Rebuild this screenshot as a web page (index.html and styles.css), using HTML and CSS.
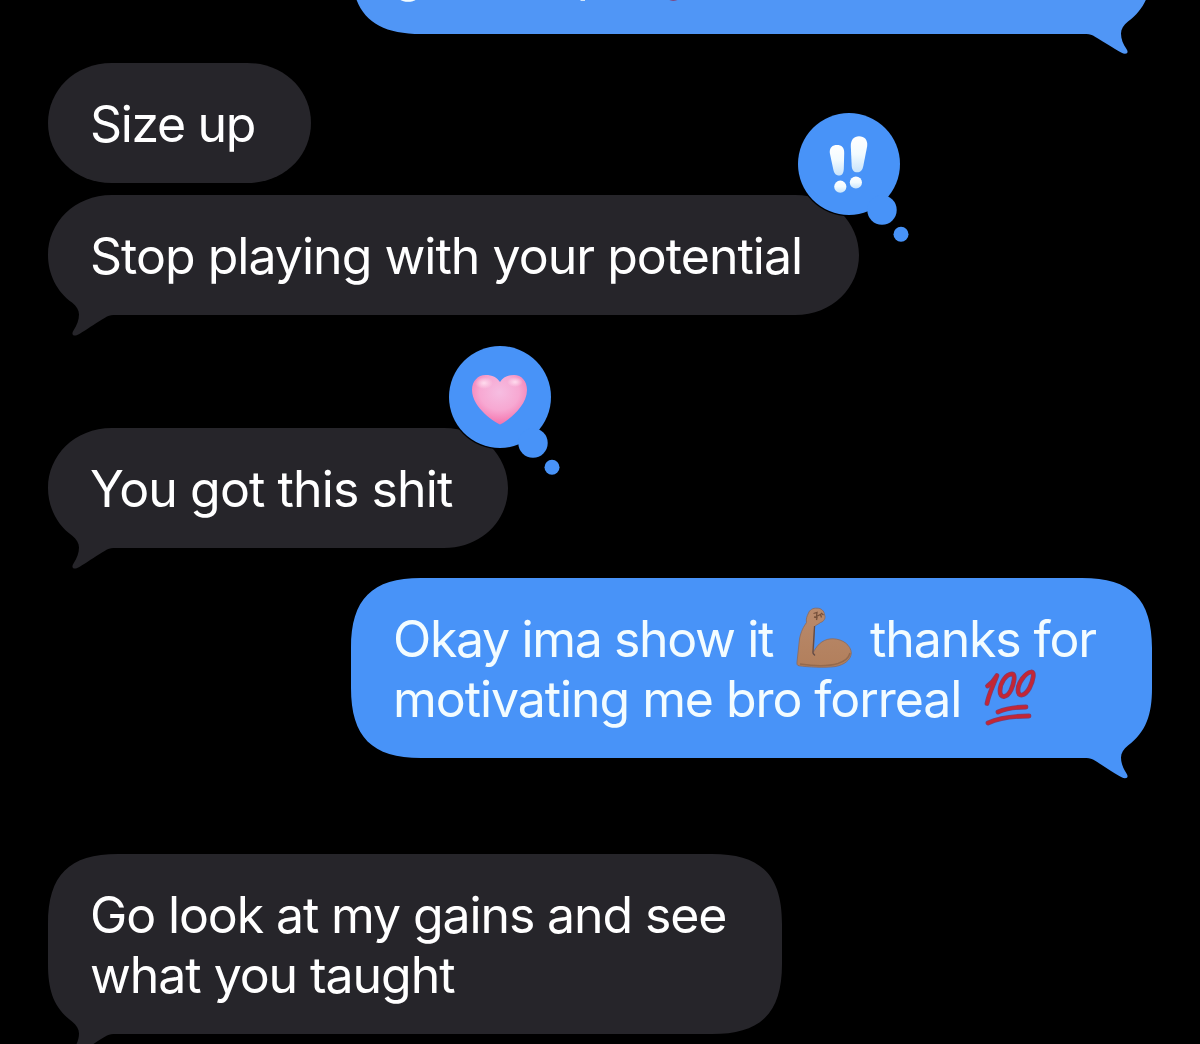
FILE: index.html
```html
<!DOCTYPE html>
<html lang="en">
<head>
    <meta charset="UTF-8">
    <title>Messages</title>
    <link rel="stylesheet" href="styles.css">
</head>
<body>
<div class="thread">

    <div class="bubble sent first">
        <svg class="shape" width="801" height="180" viewBox="0 0 801 180">
            <path d="M0 70C0 21 21 0 70 0H731C780 0 801 21 801 70V110C801 159 780 180 731 180H68C64 180 62 180.200 59 181.600C53 185 44 191 37 195C32 198 29 199.800 27 199.800C24 199.800 23.800 197.500 25.500 195C29 190 31 185 31 179.500C31 175 28.500 171 24 167.500C6 154 0 137 0 110Z"/>
        </svg>
        <div class="line good">good reps</div>
        <svg class="mark" width="20" height="8" viewBox="0 0 20 8"><path d="M7 4.500C10 6 14 5.500 17 4" fill="none" stroke="#8c3060" stroke-width="2.500"/></svg>
    </div>

    <div class="bubble received size">
        <svg class="shape" width="263" height="120" viewBox="0 0 263 120">
            <path d="M0 60C0 28 26 0 64 0H199C237 0 263 28 263 60C263 92 237 120 199 120H64C26 120 0 92 0 60Z"/>
        </svg>
        <div class="line up">Size up</div>
    </div>

    <div class="bubble received stop">
        <svg class="shape" width="811" height="120" viewBox="0 0 811 120">
            <path d="M0 60C0 28 26 0 64 0H747C785 0 811 28 811 60C811 92 785 120 747 120H68C64 120 62 120.200 59 121.600C53 125 44 131 37 135.500C32 138.500 29 140.500 27 140.500C24 140.500 23.800 138 25.500 135.500C29 130 31 125 31 119.500C31 115 28.500 111 24 107.500C9 97 0 79 0 60Z"/>
        </svg>
        <div class="line potential">Stop playing with your potential</div>
        <svg class="tapback" width="112" height="130" viewBox="0 0 112 130">
            <defs>
                <linearGradient id="bang" x1="0" y1="0" x2="0" y2="1">
                    <stop offset="0" stop-color="#fff"/>
                    <stop offset=".5" stop-color="#f2fbff"/>
                    <stop offset="1" stop-color="#c9e4fb"/>
                </linearGradient>
            </defs>
            <circle class="ring" cx="51" cy="51" r="52.2"/>
            <circle cx="51" cy="51" r="51"/>
            <circle cx="84" cy="97" r="14.7"/>
            <circle cx="103" cy="121.3" r="7.5"/>
            <g fill="url(#bang)">
                <path d="M31.800 40C31.400 34.500 34.500 32 39 32C43.500 32 46.400 34.500 46.200 40L45.800 56C45.500 60.500 44 62.500 41.200 62.500C38 62.500 36 60.500 35.200 56Z"/>
                <path d="M52.800 33C52.600 27 56 23.300 61 23.300C66.500 23.300 69.800 27 69.200 33L65.300 53C64.400 57.500 62.300 59.300 59.200 59.300C55.800 59.300 54 57.200 53.700 53Z"/>
                <circle cx="42.3" cy="73.7" r="6.100"/>
                <circle cx="57.900" cy="69.500" r="6.100"/>
            </g>
        </svg>
    </div>

    <div class="bubble received got">
        <svg class="shape" width="460" height="120" viewBox="0 0 460 120">
            <path d="M0 60C0 28 26 0 64 0H396C434 0 460 28 460 60C460 92 434 120 396 120H68C64 120 62 120.200 59 121.600C53 125 44 131 37 135.500C32 138.500 29 140.500 27 140.500C24 140.500 23.800 138 25.500 135.500C29 130 31 125 31 119.500C31 115 28.500 111 24 107.500C9 97 0 79 0 60Z"/>
        </svg>
        <div class="line this">You got this shit</div>
        <svg class="tapback love" width="112" height="130" viewBox="0 0 112 130">
            <defs>
                <radialGradient id="heart" cx=".5" cy=".35" r=".65">
                    <stop offset="0" stop-color="#f6bde1"/>
                    <stop offset=".55" stop-color="#f7a8d2"/>
                    <stop offset="1" stop-color="#f472ac"/>
                </radialGradient>
                <radialGradient id="glow">
                    <stop offset="0" stop-color="#ffdcee"/>
                    <stop offset="1" stop-color="#ffdcee" stop-opacity="0"/>
                </radialGradient>
            </defs>
            <circle class="ring" cx="51" cy="51" r="52.2"/>
            <circle cx="51" cy="51" r="51"/>
            <circle cx="84" cy="97" r="14.7"/>
            <circle cx="103" cy="121.3" r="7.5"/>
            <path fill="url(#heart)" d="M51 78.500C47 77 23 62 23 44C23 35 29 29 36.500 29C43.500 29 48 31.500 51 36C54 31.500 58.500 29 65 29C72.500 29 78 35 78 44C78 62 55 77 51 78.500Z"/>
            <ellipse fill="url(#glow)" cx="35" cy="37" rx="9" ry="6"/>
            <ellipse fill="url(#glow)" cx="66" cy="36" rx="8" ry="5"/>
        </svg>
    </div>

    <div class="bubble sent okay">
        <svg class="shape" width="801" height="180" viewBox="0 0 801 180">
            <path d="M0 70C0 21 21 0 70 0H731C780 0 801 21 801 70V110C801 159 780 180 731 180H68C64 180 62 180.200 59 181.600C53 185 44 191 37 195.500C32 198.500 29 200.200 27 200.200C24 200.200 23.800 198 25.500 195.500C29 190 31 185 31 179.500C31 175 28.500 171 24 167.500C6 154 0 137 0 110Z"/>
        </svg>
        <div class="line split">
            <span class="show">Okay ima show it</span>
            <svg class="emoji arm" width="60" height="62" viewBox="0 0 60 62">
                <defs>
                    <linearGradient id="skin" x1="0" y1="0" x2="0" y2="1">
                        <stop offset="0" stop-color="#b98a6c"/>
                        <stop offset="1" stop-color="#b27f5c"/>
                    </linearGradient>
                </defs>
                <path fill="url(#skin)" stroke="#8c6a5c" stroke-width=".8" d="M12.500 6C13.500 3 17 .8 21 1.200C25 1 28.500 4 28.600 8C30 11 28 14.500 24.500 15.500C22 17.500 20 18 18.500 19.500L17.500 45C22 36 29 31.500 37 31.800C47 32 55 38.500 55.300 46C55 53 48 58 39 59.600C28 61 12 60 3 58.800C1 58.500 .8 57 1 55L3.500 32C5 24 7.500 20 10.500 15.500C9.800 12 11 9 12.500 6Z"/>
                <path fill="none" stroke="#634b46" stroke-width="1.300" d="M18.600 19L17 44C16.500 46 17.500 47.500 19 48.500"/>
                <path fill="none" stroke="#75503b" stroke-width="1.300" d="M17.500 6.500L21 5.500L20.500 9.500L24.500 7.500L25.500 10.500M18 10L21 10.500L20.500 13M25 6L27.500 8"/>
                <path fill="none" stroke="#956a4d" stroke-width="1.500" d="M4 57C18 59 32 59.500 42 56.500C48 54.500 53 50.500 54 46"/>
            </svg>
            <span class="thanks">thanks for</span>
        </div>
        <div class="line split">
            <span class="motivating">motivating me bro forreal</span>
            <svg class="emoji hundred" width="56" height="58" viewBox="0 0 56 58">
                <g fill="none" stroke="#7e3f70" stroke-width="4.800" stroke-linecap="round" stroke-linejoin="round">
                    <path d="M4.500 17C9 14 12 10 14 6.500C11 15 6 24 4 34.500"/>
                    <path d="M29 5C23 5 17 14 17 22C17 30 24 29 28 21C31 14 33 5 29 5Z"/>
                    <path d="M48 3C42 4 35 14 35 21C35 29 42 27 46.500 19C50.500 11 52 2 48 3Z"/>
                    <path d="M15 43C24 39 34 38 43 38"/>
                    <path d="M5 54C18 48 32 47 46 47"/>
                </g>
                <g fill="none" stroke="#c42635" stroke-width="3.300" stroke-linecap="round" stroke-linejoin="round">
                    <path d="M4.500 17C9 14 12 10 14 6.500C11 15 6 24 4 34.500"/>
                    <path d="M29 5C23 5 17 14 17 22C17 30 24 29 28 21C31 14 33 5 29 5Z"/>
                    <path d="M48 3C42 4 35 14 35 21C35 29 42 27 46.500 19C50.500 11 52 2 48 3Z"/>
                    <path d="M15 43C24 39 34 38 43 38"/>
                    <path d="M5 54C18 48 32 47 46 47"/>
                </g>
            </svg>
        </div>
    </div>

    <div class="bubble received gains">
        <svg class="shape" width="734" height="180" viewBox="0 0 734 180">
            <path d="M0 70C0 21 21 0 70 0H664C713 0 734 21 734 70V110C734 159 713 180 664 180H68C64 180 62 180.200 59 181.600C53 185 44 191 37 195.500C32 198.500 29 200.500 27 200.500C24 200.500 23.800 198 25.500 195.500C29 190 31 185 31 179.500C31 175 28.500 171 24 167.500C6 154 0 137 0 110Z"/>
        </svg>
        <div class="line look">Go look at my gains and see</div>
        <div class="line taught">what you taught</div>
    </div>

</div>
</body>
</html>
```
FILE: styles.css
```css
body {
    margin: 0;
    background: #000;
    overflow: hidden;
}

.thread {
    display: flex;
    flex-direction: column;
    align-items: flex-start;
    box-sizing: border-box;
    width: 1200px;
    height: 1044px;
    padding: 0 48px;
    overflow: hidden;
    font-family: Inter, "Liberation Sans", sans-serif;
    font-size: 50px;
    font-weight: 430;
    line-height: 60px;
    color: #fff;
}

.bubble {
    position: relative;
    flex: none;
    box-sizing: border-box;
    padding: 31px 42px 29px;
}

.received {
    fill: #26252a;
}

.sent {
    align-self: flex-end;
    width: 801px;
    height: 180px;
    fill: #4893f8;
    color: #f3fcff;
}

/* bubble outline with its tail, sits behind the text */
.shape {
    position: absolute;
    left: 0;
    top: 0;
    overflow: visible;
}

.sent .shape {
    transform: scaleX(-1);
}

.line {
    position: relative;
    height: 60px;
    white-space: nowrap;
}

.split {
    display: flex;
}

.emoji {
    flex: none;
}

/* tracking, line by line */
.good {
    letter-spacing: 0.2px;
}

.up {
    letter-spacing: -1.35px;
}

.potential {
    letter-spacing: -0.98px;
}

.this {
    letter-spacing: -0.9px;
}

.show {
    letter-spacing: -1.35px;
}

.thanks {
    letter-spacing: -1.15px;
}

.motivating,
.taught {
    letter-spacing: -1.07px;
}

.look {
    letter-spacing: -1.12px;
}

/* only the bottom edge of this one is on screen */
.first {
    margin-top: -146px;
    padding-top: 89px;
    fill: #5096f6;
}

.mark {
    position: absolute;
    left: 311px;
    top: 140px;
}

.size {
    width: 263px;
    margin-top: 29px;
}

.stop {
    width: 811px;
    margin-top: 12px;
}

.got {
    width: 460px;
    margin-top: 113px;
}

.okay {
    margin-top: 30px;
}

.gains {
    width: 734px;
    margin-top: 96px;
}

.arm {
    margin: -2px 14px 0 23px;
}

.hundred {
    margin: 0 0 0 22px;
}

/* reaction balloon on the corner of a message */
.tapback {
    position: absolute;
    right: -51px;
    top: -82px;
    fill: #4893f8;
    overflow: visible;
}

.love {
    right: -53px;
}

.ring {
    fill: #000;
}
```
